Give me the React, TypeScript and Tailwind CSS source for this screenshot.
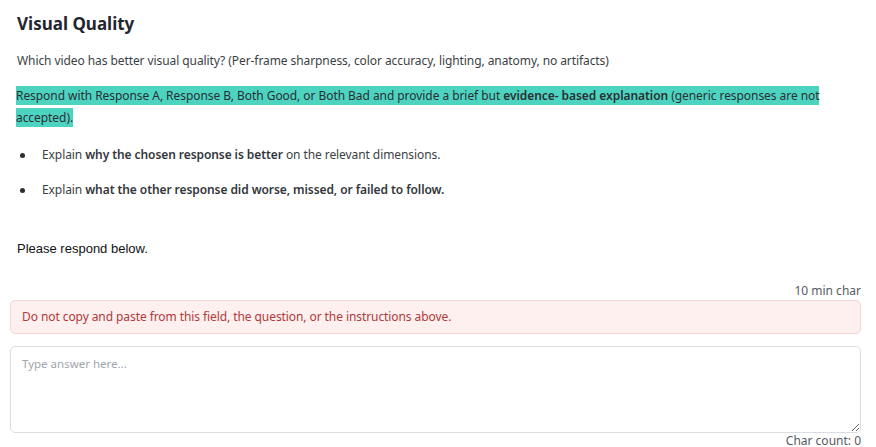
import React from "react";

const body = { fontFamily: '"Noto Sans", "Open Sans", sans-serif' };

export default function App() {
  return (
    <div className="min-h-[447px] bg-white pl-[10px] pr-[15px] text-[#3b3f45]" style={body}>
      <h1 className="ml-[7px] pt-3 text-[17px] font-bold leading-[24px] text-[#1f2630]">Visual Quality</h1>

      <p className="ml-[7px] mt-[15px] text-[12px] leading-[20px] tracking-[-0.08px]">
        Which video has better visual quality? (Per-frame sharpness, color accuracy, lighting, anatomy, no artifacts)
      </p>

      <p className="ml-[6px] mt-[14px] text-[12px] leading-[22px] tracking-[-0.06px] text-[#2b2f33]">
        <span className="bg-[#4dd4c1] py-[1px]">
          Respond with Response A, Response B, Both Good, or Both Bad and provide a brief but{" "}
          <strong className="font-semibold">evidence- based explanation</strong> (generic responses are not accepted).
        </span>
      </p>

      <ul className="mt-[16px] flex flex-col gap-[15px] text-[12px] leading-[20px] tracking-[-0.08px]">
        <li className="flex items-center">
          <span className="ml-[10px] mr-[17px] h-[5px] w-[5px] rounded-full bg-[#2b2f33]" />
          <span>
            Explain <strong className="font-semibold text-[#33373c]">why the chosen response is better</strong> on the
            relevant dimensions.
          </span>
        </li>
        <li className="flex items-center">
          <span className="ml-[10px] mr-[17px] h-[5px] w-[5px] rounded-full bg-[#2b2f33]" />
          <span>
            Explain{" "}
            <strong className="font-semibold text-[#33373c]">what the other response did worse, missed, or failed to follow.</strong>
          </span>
        </li>
      </ul>

      <p
        className="ml-[7px] mt-[39px] text-[13px] leading-[20px] text-[#111]"
        style={{ fontFamily: '"Liberation Sans", Arial, sans-serif' }}
      >
        Please respond below.
      </p>

      <div className="mt-[24px] text-right text-[12px] leading-[16px] text-[#555b61]">10 min char</div>

      <div className="mt-[1px] flex h-[34px] items-center rounded-[5px] border border-[#f6d6d4] bg-[#fdf0ef] px-[11px] text-[12px] tracking-[-0.08px] text-[#b23a3a]">
        Do not copy and paste from this field, the question, or the instructions above.
      </div>

      <textarea
        placeholder="Type answer here..."
        className="mt-[12px] block h-[87px] w-full rounded-[5px] border border-[#dadee3] px-[11px] py-[8px] text-[11.5px] leading-[18px] text-[#333] outline-none placeholder:text-[#a0a6ad]"
        style={body}
      />

      <div className="text-right text-[12px] leading-[16px] text-[#555b61]">Char count: 0</div>
    </div>
  );
}
